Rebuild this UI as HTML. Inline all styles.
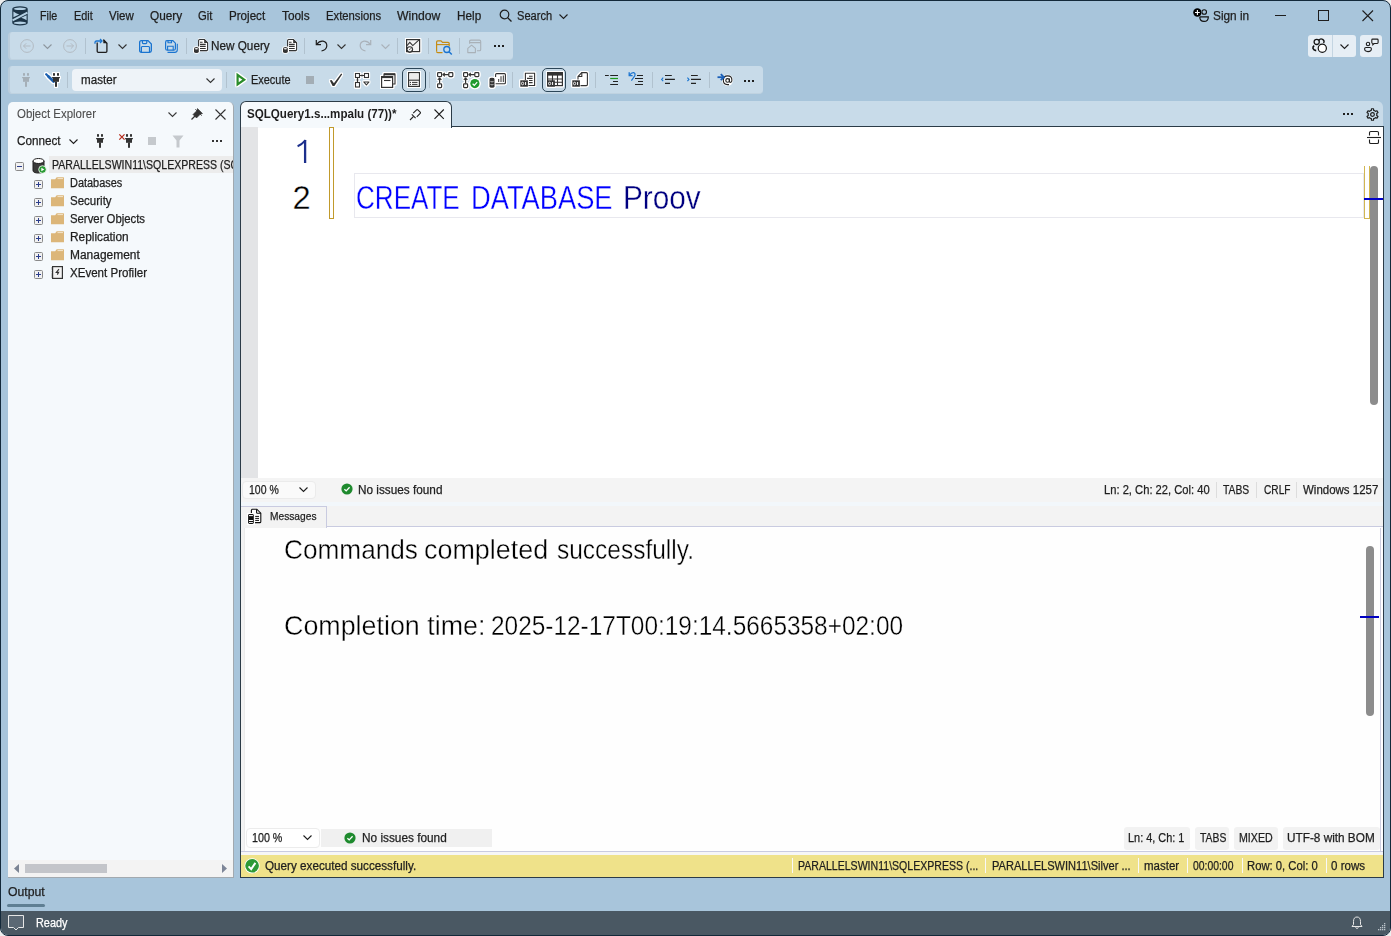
<!DOCTYPE html>
<html><head><meta charset="utf-8">
<style>
*{margin:0;padding:0;box-sizing:border-box}
html,body{width:1391px;height:936px;overflow:hidden;background:#eeeeee}
body{font-family:"Liberation Sans",sans-serif;font-size:12px;color:#1e1e1e;position:relative}
.a{position:absolute}
.t{position:absolute;white-space:nowrap;line-height:1;transform-origin:0 0;-webkit-text-stroke:0.25px currentColor}
svg{position:absolute;overflow:visible}
.tb{position:absolute;background:#c8dbe9;border-radius:4px;border-left:2px solid #bacddc;border-bottom:1px solid #bfd2e0}
.sep{position:absolute;width:1px;background:#b1c2cf}
</style></head><body>
<div class="a" style="left:0;top:0;width:1391px;height:936px;background:#a8c5db;border:1px solid #13293a;border-radius:8px"></div>
<svg style="left:12px;top:6px" width="16" height="20" viewBox="0 0 16 20">
      <path d="M0.3 2.8 A7.7 2.6 0 0 1 15.7 2.8 V16.9 A7.7 2.6 0 0 1 0.3 16.9 Z" fill="#1c3447"/>
      <ellipse cx="8" cy="2.8" rx="6.3" ry="1.3" fill="#b4d0e4"/>
      <ellipse cx="8" cy="16.9" rx="6.3" ry="1.3" fill="#b4d0e4"/>
      <path d="M1.4 5.6 Q4 7.6 7.2 8.6 L1.4 11.2 Z" fill="#b4d0e4"/>
      <path d="M14.6 9.2 L9.2 11.8 Q12 12.6 14.6 14.2 Z" fill="#b4d0e4"/>
      <path d="M0.6 14.4 L15.4 6.6" stroke="#b4d0e4" stroke-width="2"/>
    </svg>
<svg style="left:499px;top:9px" width="14" height="14"><circle cx="5.5" cy="5.5" r="4.3" fill="none" stroke="#1e1e1e" stroke-width="1.2"/><path d="M8.6 8.6 L12.5 12.5" stroke="#1e1e1e" stroke-width="1.3"/></svg>
<svg style="left:559px;top:14px" width="10" height="6"><path d="M0.5 0.5 L4.5 4.5 L8.5 0.5" fill="none" stroke="#1e1e1e" stroke-width="1.1"/></svg>
<svg style="left:1193px;top:8px" width="17" height="15" viewBox="0 0 17 15"><circle cx="11.2" cy="4" r="2.3" fill="none" stroke="#111" stroke-width="1.1"/><path d="M6.8 8.9 H15.3 Q15.3 13.4 11 13.4 Q6.8 13.4 6.8 8.9 Z" fill="none" stroke="#111" stroke-width="1.2"/><circle cx="4.4" cy="4.5" r="4.6" fill="#a9c6dc"/><circle cx="4.4" cy="4.5" r="4.2" fill="#000"/><path d="M4.4 2.1 V6.9 M2 4.5 H6.8" stroke="#fff" stroke-width="1.1"/></svg>
<div class="a" style="left:1275px;top:15px;width:11px;height:1px;background:#1e1e1e"></div>
<div class="a" style="left:1318px;top:10px;width:11px;height:11px;border:1px solid #1e1e1e"></div>
<svg style="left:1362px;top:10px" width="12" height="12"><path d="M0.5 0.5 L11 11 M11 0.5 L0.5 11" stroke="#1e1e1e" stroke-width="1.1"/></svg>
<div class="a" style="left:1308px;top:35px;width:48px;height:22px;background:#e6eef5;border-radius:3px"></div>
<div class="a" style="left:1332px;top:35px;width:1px;height:22px;background:#c4d5e2"></div>
<div class="a" style="left:1360px;top:35px;width:22px;height:22px;background:#e6eef5;border-radius:3px"></div>
<svg style="left:1312px;top:38px" width="17" height="16" viewBox="0 0 17 16"><circle cx="4.7" cy="3.9" r="2.6" fill="none" stroke="#111" stroke-width="1.3"/><path d="M7 2.3 A2.6 2.6 0 0 1 11.6 5" fill="none" stroke="#111" stroke-width="1.3"/><path d="M2.2 7.6 Q0.6 8.6 1 10.6 Q1.6 12.4 4.2 12.6" fill="none" stroke="#111" stroke-width="1.6"/><circle cx="10.3" cy="10.3" r="4.1" fill="#fff" stroke="#111" stroke-width="1.2"/></svg>
<svg style="left:1340px;top:44px" width="10" height="6"><path d="M0.5 0.5 L4.5 4.5 L8.5 0.5" fill="none" stroke="#1e1e1e" stroke-width="1.1"/></svg>
<svg style="left:1363px;top:38px" width="17" height="15" viewBox="0 0 17 15"><circle cx="5" cy="6" r="1.7" fill="none" stroke="#1e1e1e" stroke-width="1.1"/><path d="M1.6 10.8 Q1.6 9.5 3 9.5 H7 Q8.4 9.5 8.4 10.8 Q8.4 13.6 5 13.6 Q1.6 13.6 1.6 10.8 Z" fill="none" stroke="#1e1e1e" stroke-width="1.1"/><path d="M9.6 1.1 H14.2 Q15.1 1.1 15.1 2 V4.6 Q15.1 5.5 14.2 5.5 H11.2 L9.8 6.8 V5.5 Q8.8 5.5 8.8 4.6 V2 Q8.8 1.1 9.6 1.1 Z" fill="none" stroke="#1e1e1e" stroke-width="1.1"/></svg>
<div class="tb" style="left:8px;top:32px;width:505px;height:28px"></div>
<div class="tb" style="left:8px;top:66px;width:755px;height:28px"></div>
<svg style="left:20px;top:39px" width="14" height="14" viewBox="0 0 14 14"><circle cx="7" cy="7" r="6.4" fill="none" stroke="#b3bbc3" stroke-width="1"/><path d="M10.5 7 H3.5 M6.2 4.3 L3.5 7 L6.2 9.7" fill="none" stroke="#b3bbc3" stroke-width="1"/></svg>
<svg style="left:43px;top:44px" width="10" height="6"><path d="M0.5 0.5 L4.5 4.5 L8.5 0.5" fill="none" stroke="#8d969e" stroke-width="1.1"/></svg>
<svg style="left:63px;top:39px" width="14" height="14" viewBox="0 0 14 14"><circle cx="7" cy="7" r="6.4" fill="none" stroke="#b3bbc3" stroke-width="1"/><path d="M3.5 7 H10.5 M7.8 4.3 L10.5 7 L7.8 9.7" fill="none" stroke="#b3bbc3" stroke-width="1"/></svg>
<div class="sep" style="left:85px;top:38px;height:16px"></div>
<svg style="left:94px;top:38px" width="15" height="16" viewBox="0 0 15 16"><path d="M3.2 4.5 V13.3 Q3.2 14.4 4.3 14.4 H11.8 Q12.9 14.4 12.9 13.3 V5.2 L9.5 1.6" fill="none" stroke="#1e1e1e" stroke-width="1.3"/><path d="M9.3 1.2 L13.2 5.2 H9.3 Z" fill="#1e1e1e"/><path d="M1 5.8 V4.6 Q1 3 2.6 3 H7.5" fill="none" stroke="#1a74d0" stroke-width="1.3"/><path d="M6 1 L8 3 L6 5" fill="none" stroke="#1a74d0" stroke-width="1.3"/></svg>
<svg style="left:118px;top:44px" width="10" height="6"><path d="M0.5 0.5 L4.5 4.5 L8.5 0.5" fill="none" stroke="#333" stroke-width="1.1"/></svg>
<svg style="left:139px;top:40px" width="13" height="13" viewBox="0 0 13 13"><path d="M2.2 0.65 H9 L12.35 4 V10.6 Q12.35 12.35 10.6 12.35 H2.4 Q0.65 12.35 0.65 10.6 V2.4 Q0.65 0.65 2.2 0.65 Z" fill="none" stroke="#1a74d0" stroke-width="1.3"/><path d="M3.4 0.65 V2.6 Q3.4 3.6 4.4 3.6 H6.8 Q7.8 3.6 7.8 2.6 V0.65 M2.4 12.35 V7.4 Q2.4 6.5 3.3 6.5 H9.6 Q10.5 6.5 10.5 7.4 V12.35" fill="none" stroke="#1a74d0" stroke-width="1.2"/></svg>
<svg style="left:165px;top:40px" width="13" height="13" viewBox="0 0 13 13"><path d="M1.9 0.6 H7.8 L10.4 3.2 V8.4 Q10.4 10.2 8.6 10.2 H2.4 Q0.6 10.2 0.6 8.4 V2.4 Q0.6 0.6 1.9 0.6 Z" fill="none" stroke="#1a74d0" stroke-width="1.2"/><path d="M3 0.6 V2.8 H6.5 V0.6 M2.6 10.2 V6.3 H8.2 V10.2" fill="none" stroke="#1a74d0" stroke-width="1.1"/><path d="M2.5 12.4 H9.8 Q12.3 12.4 12.3 9.8 V3.8" fill="none" stroke="#1a74d0" stroke-width="1.1"/></svg>
<div class="sep" style="left:186px;top:38px;height:16px"></div>
<svg style="left:193px;top:38px" width="17" height="17" viewBox="0 0 17 17"><path d="M5 0.6 H11.7 L15.4 4.3 V13.4 H5 Z" fill="#fff"/><rect x="0" y="8.2" width="7" height="7.6" rx="3" fill="#fff"/><path d="M5.6 8.6 V2.5 Q5.6 1.5 6.6 1.5 H11.4 L14.6 4.7 V11.6 Q14.6 12.6 13.6 12.6 H7" fill="#fff" stroke="#333" stroke-width="1.1"/><path d="M11.2 1.5 L14.6 4.9 H11.2 Z" fill="#333"/><path d="M7 4.3 H9.6 M7 6.4 H12.7 M7 8.4 H12.7 M7 10.5 H12.7" stroke="#333" stroke-width="1.1"/><path d="M1 10.6 V13.4 Q1 15 3.4 15 Q5.8 15 5.8 13.4 V10.6 Q5.8 9.1 3.4 9.1 Q1 9.1 1 10.6Z" fill="#333"/><ellipse cx="3.4" cy="10.7" rx="1.6" ry="0.75" fill="#f0f0f0"/></svg>
<svg style="left:282px;top:38px" width="17" height="17" viewBox="0 0 17 17"><path d="M5 0.6 H11.7 L15.4 4.3 V13.4 H5 Z" fill="#fff"/><rect x="0" y="8.2" width="7" height="7.6" rx="3" fill="#fff"/><path d="M5.6 8.6 V2.5 Q5.6 1.5 6.6 1.5 H11.4 L14.6 4.7 V11.6 Q14.6 12.6 13.6 12.6 H7" fill="#fff" stroke="#333" stroke-width="1.1"/><path d="M11.2 1.5 L14.6 4.9 H11.2 Z" fill="#333"/><path d="M7 4.3 H9.6 M7 6.4 H12.7 M7 8.4 H12.7 M7 10.5 H12.7" stroke="#333" stroke-width="1.1"/><path d="M1 10.6 V13.4 Q1 15 3.4 15 Q5.8 15 5.8 13.4 V10.6 Q5.8 9.1 3.4 9.1 Q1 9.1 1 10.6Z" fill="#333"/><ellipse cx="3.4" cy="10.7" rx="1.6" ry="0.75" fill="#f0f0f0"/></svg>
<div class="sep" style="left:304px;top:38px;height:16px"></div>
<svg style="left:315px;top:39px" width="13" height="13" viewBox="0 0 13 13"><path d="M1.3 1 V5.7 H6" fill="none" stroke="#1e1e1e" stroke-width="1.2"/><path d="M1.6 5.4 Q4.5 1.8 8 2.2 Q12 3 11.8 7 Q11.4 11 6.5 12" fill="none" stroke="#1e1e1e" stroke-width="1.2"/></svg>
<svg style="left:337px;top:44px" width="10" height="6"><path d="M0.5 0.5 L4.5 4.5 L8.5 0.5" fill="none" stroke="#333" stroke-width="1.1"/></svg>
<svg style="left:359px;top:39px" width="13" height="13" viewBox="0 0 13 13"><path d="M11.7 1 V5.7 H7" fill="none" stroke="#aab2ba" stroke-width="1.2"/><path d="M11.4 5.4 Q8.5 1.8 5 2.2 Q1 3 1.2 7 Q1.6 11 6.5 12" fill="none" stroke="#aab2ba" stroke-width="1.2"/></svg>
<svg style="left:381px;top:44px" width="10" height="6"><path d="M0.5 0.5 L4.5 4.5 L8.5 0.5" fill="none" stroke="#aab2ba" stroke-width="1.1"/></svg>
<div class="sep" style="left:397px;top:38px;height:16px"></div>
<svg style="left:406px;top:39px;filter:drop-shadow(1px 0 0 #fff) drop-shadow(-1px 0 0 #fff) drop-shadow(0 1px 0 #fff) drop-shadow(0 -1px 0 #fff);" width="15" height="15" viewBox="0 0 15 15"><rect x="0.6" y="0.6" width="13" height="12" fill="#f4f4f4" stroke="#333" stroke-width="1.2"/><path d="M1 6.6 L3.8 3.4 L6.8 6.6 L13 0.9" fill="none" stroke="#333" stroke-width="1.1"/><circle cx="3.8" cy="10.6" r="3.3" fill="#333"/><circle cx="3.8" cy="10.3" r="2.1" fill="#f4f4f4"/><path d="M3.2 11 L4.8 9.4" stroke="#333" stroke-width="0.9"/></svg>
<div class="sep" style="left:428px;top:38px;height:16px"></div>
<svg style="left:436px;top:40px" width="17" height="15" viewBox="0 0 17 15"><path d="M0.6 11.5 V2 Q0.6 0.8 1.8 0.8 H5 L6.5 2.3 H12 Q13.2 2.3 13.2 3.5 V6.5" fill="none" stroke="#c58b12" stroke-width="1.2"/><path d="M0.6 4.6 H13" stroke="#c58b12" stroke-width="1.1"/><path d="M0.6 11.5 Q0.6 12.6 1.8 12.6 H6.5" fill="none" stroke="#c58b12" stroke-width="1.2"/><circle cx="10.8" cy="9.5" r="3" fill="none" stroke="#1a74d0" stroke-width="1.3"/><path d="M13 11.7 L15.8 14.5" stroke="#1a74d0" stroke-width="1.5"/></svg>
<div class="sep" style="left:459px;top:38px;height:16px"></div>
<svg style="left:467px;top:39px" width="15" height="15" viewBox="0 0 15 15"><path d="M2.6 4.8 V2.4 Q2.6 1.1 3.9 1.1 H12.4 Q13.7 1.1 13.7 2.4 V10.5 Q13.7 11.8 12.4 11.8 H10 M2.6 3.6 H13.7" fill="none" stroke="#a9b1b8" stroke-width="1.1"/><path d="M0.8 13.6 V9.4 L4.6 6.2 L8.4 9.4 V13.6 Z" fill="none" stroke="#a9b1b8" stroke-width="1.1" stroke-linejoin="round"/></svg>
<svg style="left:494px;top:45px" width="12" height="3"><rect x="0" y="0" width="2" height="2" fill="#1e1e1e"/><rect x="4" y="0" width="2" height="2" fill="#1e1e1e"/><rect x="8" y="0" width="2" height="2" fill="#1e1e1e"/></svg>
<svg style="left:22px;top:73px" width="8" height="14" viewBox="0 0 8 14"><rect x="1" y="0" width="2" height="2.8" rx="0.6" fill="#a5afb7"/><rect x="5" y="0" width="2" height="2.8" rx="0.6" fill="#a5afb7"/><rect x="0" y="4" width="8" height="1.2" rx="0.5" fill="#a5afb7"/><rect x="1" y="4.5" width="6" height="4.3" fill="#a5afb7"/><rect x="3" y="8.5" width="2" height="5.3" fill="#a5afb7"/></svg>
<svg style="left:44px;top:72px;filter:drop-shadow(1px 0 0 #fff) drop-shadow(-1px 0 0 #fff) drop-shadow(0 1px 0 #fff) drop-shadow(0 -1px 0 #fff);" width="17" height="16" viewBox="0 0 17 16"><path d="M2.2 2.2 L3 3" stroke="#1a5fb0" stroke-width="2.2" stroke-linecap="round"/><path d="M4.2 4.2 L9.6 9.6" stroke="#1a5fb0" stroke-width="2.8" stroke-linecap="round"/><rect x="9" y="1" width="2" height="2.8" rx="0.6" fill="#333"/><rect x="13" y="1" width="2" height="2.8" rx="0.6" fill="#333"/><rect x="8" y="5" width="8" height="1.2" rx="0.5" fill="#333"/><rect x="9" y="5.5" width="6" height="4.3" fill="#333"/><rect x="11" y="9.5" width="2" height="5.3" fill="#333"/></svg>
<div class="sep" style="left:67px;top:72px;height:16px"></div>
<div class="a" style="left:72px;top:69px;width:150px;height:22px;background:#eef3f8;border-radius:4px"></div>
<svg style="left:206px;top:78px" width="10" height="6"><path d="M0.5 0.5 L4.5 4.5 L8.5 0.5" fill="none" stroke="#333" stroke-width="1.1"/></svg>
<div class="sep" style="left:226px;top:72px;height:16px"></div>
<svg style="left:236px;top:73px;filter:drop-shadow(1px 0 0 #fff) drop-shadow(-1px 0 0 #fff) drop-shadow(0 1px 0 #fff) drop-shadow(0 -1px 0 #fff);" width="10" height="14"><path d="M1.6 2 L8.2 6.7 L1.6 11.4 Z" fill="#fff" stroke="#2a8c2a" stroke-width="2.2"/></svg>
<div class="a" style="left:306px;top:76px;width:8px;height:8px;background:#a3adb5"></div>
<svg style="left:329px;top:73px;filter:drop-shadow(1px 0 0 #fff) drop-shadow(-1px 0 0 #fff) drop-shadow(0 1px 0 #fff) drop-shadow(0 -1px 0 #fff);" width="14" height="14" viewBox="0 0 14 14"><path d="M0.8 7.6 L2.6 7 L4.9 10.2 L12.2 0.6 L13.2 1.2 L5.4 13 L3.6 13 Z" fill="#333"/></svg>
<svg style="left:354px;top:72px;filter:drop-shadow(1px 0 0 #fff) drop-shadow(-1px 0 0 #fff) drop-shadow(0 1px 0 #fff) drop-shadow(0 -1px 0 #fff);" width="16" height="16" viewBox="0 0 16 16"><rect x="1.5" y="1.5" width="4" height="4" fill="#fff" stroke="#333" stroke-width="1.1"/><rect x="10.5" y="1.5" width="4" height="4" fill="#fff" stroke="#333" stroke-width="1.1"/><path d="M5.5 3.5 H10.5 M3.5 5.5 V10" stroke="#333" stroke-width="1.1"/><circle cx="8" cy="3.5" r="0.9" fill="#333"/><circle cx="3.5" cy="8" r="0.9" fill="#333"/><rect x="1.5" y="10.5" width="4" height="4.5" fill="#fff" stroke="#333" stroke-width="1.1"/><path d="M9.8 10 H15 L12.4 12.8 Z" fill="#fff" stroke="#333" stroke-width="1.1" stroke-linejoin="round"/></svg>
<svg style="left:381px;top:73px;filter:drop-shadow(1px 0 0 #fff) drop-shadow(-1px 0 0 #fff) drop-shadow(0 1px 0 #fff) drop-shadow(0 -1px 0 #fff);" width="15" height="15" viewBox="0 0 15 15"><path d="M3 3 V1 H14 V11 H12" fill="#fff" stroke="#333" stroke-width="1.1"/><path d="M3 1.3 H14" stroke="#333" stroke-width="2"/><rect x="0.6" y="3.6" width="11" height="10.8" fill="#fff" stroke="#333" stroke-width="1.2"/><path d="M0.6 4.3 H11.6" stroke="#333" stroke-width="1.6"/><path d="M3 7.5 H9.5" stroke="#333" stroke-width="1.1"/></svg>
<div class="a" style="left:402px;top:68px;width:24px;height:24px;border:1.5px solid #2c4658;border-radius:5px;background:#c9dbe8"></div>
<svg style="left:408px;top:72px;filter:drop-shadow(1px 0 0 #fff) drop-shadow(-1px 0 0 #fff) drop-shadow(0 1px 0 #fff) drop-shadow(0 -1px 0 #fff);" width="12" height="15" viewBox="0 0 12 15"><rect x="0.6" y="0.6" width="10.8" height="13.8" fill="#fff" stroke="#333" stroke-width="1.2"/><rect x="1.5" y="1.5" width="9" height="6.8" fill="#ececec"/><path d="M0.6 8.2 H11.4" stroke="#333" stroke-width="1.1"/><path d="M4 10.4 H9.5 M4 12.4 H9.5" stroke="#333" stroke-width="1"/><circle cx="2.4" cy="10.4" r="0.6" fill="#333"/><circle cx="2.4" cy="12.4" r="0.6" fill="#333"/></svg>
<div class="sep" style="left:429px;top:72px;height:16px"></div>
<svg style="left:437px;top:72px;filter:drop-shadow(1px 0 0 #fff) drop-shadow(-1px 0 0 #fff) drop-shadow(0 1px 0 #fff) drop-shadow(0 -1px 0 #fff);" width="17" height="17" viewBox="0 0 17 17"><rect x="0.6" y="0.6" width="4" height="4" rx="0.8" fill="#fff" stroke="#333" stroke-width="1.2"/><rect x="11.8" y="0.6" width="4" height="4" rx="0.8" fill="#fff" stroke="#333" stroke-width="1.2"/><path d="M6 2.6 H11.8 M7.8 0.8 L6 2.6 L7.8 4.4" fill="none" stroke="#333" stroke-width="1.2"/><path d="M2.6 11.8 V6 M0.8 7.8 L2.6 6 L4.4 7.8" fill="none" stroke="#333" stroke-width="1.2"/><rect x="0.6" y="11.8" width="4" height="3.8" rx="0.8" fill="#fff" stroke="#333" stroke-width="1.2"/></svg>
<svg style="left:463px;top:72px;filter:drop-shadow(1px 0 0 #fff) drop-shadow(-1px 0 0 #fff) drop-shadow(0 1px 0 #fff) drop-shadow(0 -1px 0 #fff);" width="17" height="17" viewBox="0 0 17 17"><rect x="0.6" y="0.6" width="4" height="4" rx="0.8" fill="#fff" stroke="#333" stroke-width="1.2"/><rect x="11.8" y="0.6" width="4" height="4" rx="0.8" fill="#fff" stroke="#333" stroke-width="1.2"/><path d="M6 2.6 H11.8 M7.8 0.8 L6 2.6 L7.8 4.4" fill="none" stroke="#333" stroke-width="1.2"/><path d="M2.6 11.8 V6 M0.8 7.8 L2.6 6 L4.4 7.8" fill="none" stroke="#333" stroke-width="1.2"/><rect x="0.6" y="11.8" width="4" height="3.8" rx="0.8" fill="#fff" stroke="#333" stroke-width="1.2"/><circle cx="11.9" cy="11.6" r="4.6" fill="#1e9a2e"/><path d="M9.6 11.7 L11.3 13.3 L14.2 10.2" fill="none" stroke="#fff" stroke-width="1.2"/></svg>
<svg style="left:489px;top:73px;filter:drop-shadow(1px 0 0 #fff) drop-shadow(-1px 0 0 #fff) drop-shadow(0 1px 0 #fff) drop-shadow(0 -1px 0 #fff);" width="17" height="15" viewBox="0 0 17 15"><path d="M6.6 4 V1.6 Q6.6 0.6 7.6 0.6 H15.4 Q16.4 0.6 16.4 1.6 V9.8 Q16.4 10.8 15.4 10.8 H6.6" fill="#fff" stroke="#333" stroke-width="1.1"/><path d="M9.7 9 V6 M12 9 V3.2 M14.3 9 V2.5" stroke="#333" stroke-width="1"/><path d="M0.5 6 Q0.5 4.8 3 4.8 Q5.5 4.8 5.5 6 V13.5 Q5.5 14.7 3 14.7 Q0.5 14.7 0.5 13.5 Z" fill="#333"/><path d="M1.5 8.5 Q3 9.3 4.5 8.5 M1.5 11.5 Q3 12.3 4.5 11.5" fill="none" stroke="#ddd" stroke-width="0.8"/></svg>
<div class="sep" style="left:512px;top:72px;height:16px"></div>
<svg style="left:520px;top:72px;filter:drop-shadow(1px 0 0 #fff) drop-shadow(-1px 0 0 #fff) drop-shadow(0 1px 0 #fff) drop-shadow(0 -1px 0 #fff);" width="17" height="17" viewBox="0 0 17 17"><path d="M5.4 8 V1.2 H14.6 V13.5 H8.5" fill="#fff" stroke="#333" stroke-width="1.1"/><path d="M9 4.3 H12.6 M7 6.4 H12.6 M9 8.5 H12.6 M9 10.6 H12.6" stroke="#333" stroke-width="1.1"/><rect x="0.3" y="8.3" width="7.6" height="6.4" fill="#333"/><path d="M2.6 10.2 Q1.5 10.2 1.5 11.5 Q1.5 12.8 2.6 12.8 Q3.7 12.8 3.7 11.5 Q3.7 10.2 2.6 10.2 Z" fill="none" stroke="#fff" stroke-width="0.9"/><path d="M5.6 10 V13" stroke="#fff" stroke-width="1"/></svg>
<div class="a" style="left:542px;top:68px;width:24px;height:24px;border:1.5px solid #2c4658;border-radius:5px;background:#c9dbe8"></div>
<svg style="left:547px;top:72px;filter:drop-shadow(1px 0 0 #fff) drop-shadow(-1px 0 0 #fff) drop-shadow(0 1px 0 #fff) drop-shadow(0 -1px 0 #fff);" width="17" height="17" viewBox="0 0 17 17"><rect x="0.6" y="0.6" width="14.8" height="13" fill="#fff" stroke="#333" stroke-width="1.2"/><rect x="0.6" y="0.6" width="14.8" height="3" fill="#333"/><path d="M0.6 7 H15.4 M0.6 10.3 H15.4 M5.5 0.6 V13.6 M10.5 0.6 V13.6" stroke="#333" stroke-width="1.1"/><rect x="0.3" y="8.3" width="7.6" height="6.4" fill="#333"/><path d="M2.6 10.2 Q1.5 10.2 1.5 11.5 Q1.5 12.8 2.6 12.8 Q3.7 12.8 3.7 11.5 Q3.7 10.2 2.6 10.2 Z" fill="none" stroke="#fff" stroke-width="0.9"/><path d="M5.6 10 V13" stroke="#fff" stroke-width="1"/></svg>
<svg style="left:572px;top:72px;filter:drop-shadow(1px 0 0 #fff) drop-shadow(-1px 0 0 #fff) drop-shadow(0 1px 0 #fff) drop-shadow(0 -1px 0 #fff);" width="17" height="17" viewBox="0 0 17 17"><path d="M6 7.5 V4.5 L9.8 0.6 H14.4 Q15.4 0.6 15.4 1.6 V12.6 Q15.4 13.6 14.4 13.6 H8.5" fill="#fff" stroke="#333" stroke-width="1.1"/><path d="M6 4.5 H9.8 V0.6" fill="none" stroke="#333" stroke-width="1.1"/><rect x="0.3" y="8.3" width="7.6" height="6.4" fill="#333"/><path d="M2.6 10.2 Q1.5 10.2 1.5 11.5 Q1.5 12.8 2.6 12.8 Q3.7 12.8 3.7 11.5 Q3.7 10.2 2.6 10.2 Z" fill="none" stroke="#fff" stroke-width="0.9"/><path d="M5.6 10 V13" stroke="#fff" stroke-width="1"/></svg>
<div class="sep" style="left:595px;top:72px;height:16px"></div>
<svg style="left:600px;top:70px" width="20" height="18" viewBox="0 0 20 18"><path d="M5 5.5 H8.8 M10.2 5.5 H18 M13 11.5 H18 M10.2 14.5 H18" stroke="#222" stroke-width="1.2"/><path d="M10.2 8.5 H18" stroke="#1a9a1a" stroke-width="1.2"/></svg>
<svg style="left:626px;top:70px" width="20" height="18" viewBox="0 0 20 18"><path d="M11 5.5 H17 M9 8.5 H17 M12 11.5 H17 M9 14.5 H17" stroke="#222" stroke-width="1.2"/><path d="M3.2 2.2 V5.6 H6.6" fill="none" stroke="#1a74d0" stroke-width="1.3"/><path d="M3.6 5.2 Q5.5 2.4 7.5 2.6 Q9.6 3 8.8 5.8 L5.4 10.6" fill="none" stroke="#1a74d0" stroke-width="1.2"/></svg>
<div class="sep" style="left:652px;top:72px;height:16px"></div>
<svg style="left:660px;top:72px" width="16" height="14" viewBox="0 0 16 14"><path d="M5 3.5 H11.8 M5 7.4 H14.9 M5 11.4 H10" stroke="#222" stroke-width="1.1"/><path d="M3.2 5.6 L1.6 7.4 L3.2 9.2" fill="none" stroke="#1a74d0" stroke-width="1.1"/></svg>
<svg style="left:686px;top:72px" width="16" height="14" viewBox="0 0 16 14"><path d="M5 3.5 H11.8 M5 7.4 H14.9 M5 11.4 H10" stroke="#222" stroke-width="1.1"/><path d="M1.4 5.6 L3 7.4 L1.4 9.2" fill="none" stroke="#1a74d0" stroke-width="1.1"/></svg>
<div class="sep" style="left:709px;top:72px;height:16px"></div>
<svg style="left:716px;top:72px" width="18" height="16" viewBox="0 0 18 16"><circle cx="11.5" cy="8.2" r="5.6" fill="#fff"/><circle cx="11.6" cy="8.4" r="1.8" fill="none" stroke="#222" stroke-width="1.1"/><path d="M13.4 6.6 V9.2 Q13.4 10.4 14.5 10.4 Q15.9 10.4 15.9 8.2 Q15.9 3.9 11.6 3.9 Q7.3 3.9 7.3 8.3 Q7.3 12.6 11.6 12.6 H13" fill="none" stroke="#222" stroke-width="1.1"/><path d="M1.5 5.2 H7" stroke="#1a5fb8" stroke-width="1.8"/><path d="M4.8 2.2 L7.8 5.2 L4.8 8.2" fill="none" stroke="#1a5fb8" stroke-width="1.9"/></svg>
<svg style="left:744px;top:80px" width="12" height="3"><rect x="0" y="0" width="2" height="2" fill="#1e1e1e"/><rect x="4" y="0" width="2" height="2" fill="#1e1e1e"/><rect x="8" y="0" width="2" height="2" fill="#1e1e1e"/></svg>
<div class="a" style="left:8px;top:102px;width:226px;height:776px;background:#f5f9fc;border-radius:5px 5px 0 0;border-right:1px solid #a2a9af;border-bottom:1px solid #a2a9af"></div>
<svg style="left:168px;top:112px" width="10" height="6"><path d="M0.5 0.5 L4.5 4.5 L8.5 0.5" fill="none" stroke="#3a3a3a" stroke-width="1.1"/></svg>
<svg style="left:191px;top:108px" width="12" height="12" viewBox="0 0 12 12">
      <path d="M4 1 L11 8 M6.5 0.5 L11.5 5.5 L9 6.5 L5.5 10 L2 6.5 L5.5 3 Z" fill="#333" stroke="#333" stroke-width="0.6"/><path d="M0.5 11.5 L4 8" stroke="#333" stroke-width="1.2"/></svg>
<svg style="left:215px;top:109px" width="12" height="12"><path d="M0.5 0.5 L10.5 10.5 M10.5 0.5 L0.5 10.5" stroke="#333" stroke-width="1.1"/></svg>
<svg style="left:69px;top:139px" width="10" height="6"><path d="M0.5 0.5 L4.5 4.5 L8.5 0.5" fill="none" stroke="#1e1e1e" stroke-width="1.1"/></svg>
<svg style="left:96px;top:134px" width="8" height="14" viewBox="0 0 8 14"><rect x="1" y="0" width="2" height="2.8" rx="0.6" fill="#333"/><rect x="5" y="0" width="2" height="2.8" rx="0.6" fill="#333"/><rect x="0" y="4" width="8" height="1.2" rx="0.5" fill="#333"/><rect x="1" y="4.5" width="6" height="4.3" fill="#333"/><rect x="3" y="8.5" width="2" height="5.3" fill="#333"/></svg>
<svg style="left:125px;top:134px" width="8" height="14" viewBox="0 0 8 14"><rect x="1" y="0" width="2" height="2.8" rx="0.6" fill="#333"/><rect x="5" y="0" width="2" height="2.8" rx="0.6" fill="#333"/><rect x="0" y="4" width="8" height="1.2" rx="0.5" fill="#333"/><rect x="1" y="4.5" width="6" height="4.3" fill="#333"/><rect x="3" y="8.5" width="2" height="5.3" fill="#333"/></svg>
<svg style="left:119px;top:134px" width="6" height="6"><path d="M0.3 0.3 L5.5 5.7 M5.5 0.3 L0.3 5.7" stroke="#b52a1a" stroke-width="1.2"/></svg>
<div class="a" style="left:148px;top:137px;width:8px;height:8px;background:#c5c9cd"></div>
<svg style="left:172px;top:135px" width="12" height="13"><path d="M0.5 0.5 H11.5 L7.5 5.5 V12.5 H4.5 V5.5 Z" fill="#c5c9cd"/></svg>
<svg style="left:212px;top:140px" width="12" height="3"><rect x="0" y="0" width="2" height="2" fill="#333"/><rect x="4" y="0" width="2" height="2" fill="#333"/><rect x="8" y="0" width="2" height="2" fill="#333"/></svg>
<div class="a" style="left:49px;top:156px;width:184px;height:17px;background:#ececec"></div>
<svg style="left:15px;top:162px" width="9" height="9"><rect x="0.5" y="0.5" width="8" height="8" rx="1" fill="#f1f1f1" stroke="#8a8a8a"/><path d="M2 4.5 H7" stroke="#2c3e8c" stroke-width="1"/></svg>
<svg style="left:32px;top:158px" width="15" height="16" viewBox="0 0 15 16">
      <path d="M1 3 V12.5 Q1 15 6.5 15 Q12 15 12 12.5 V3" fill="#3a3a3a" stroke="#1e1e1e"/>
      <ellipse cx="6.5" cy="3" rx="5.5" ry="2.5" fill="#fff" stroke="#1e1e1e"/>
      <circle cx="10.5" cy="11.5" r="3.8" fill="#2b9a36" stroke="#fff" stroke-width="0.8"/><path d="M9.3 9.7 L12.3 11.5 L9.3 13.3 Z" fill="#fff"/></svg>
<svg style="left:34px;top:180px" width="9" height="9"><rect x="0.5" y="0.5" width="8" height="8" rx="1" fill="#f1f1f1" stroke="#8a8a8a"/><path d="M2 4.5 H7" stroke="#2c3e8c" stroke-width="1"/><path d="M4.5 2 V7" stroke="#2c3e8c" stroke-width="1"/></svg>
<svg style="left:51px;top:177px" width="13" height="12" viewBox="0 0 13 12"><path d="M0 2.2 H4.2 L5.4 0.6 Q5.6 0.3 6 0.3 H12.6 Q13 0.3 13 0.7 V11.2 H0 Z" fill="#dcb679"/><path d="M6.5 1.6 H12" stroke="#f6ead4" stroke-width="0.9"/></svg>
<svg style="left:34px;top:198px" width="9" height="9"><rect x="0.5" y="0.5" width="8" height="8" rx="1" fill="#f1f1f1" stroke="#8a8a8a"/><path d="M2 4.5 H7" stroke="#2c3e8c" stroke-width="1"/><path d="M4.5 2 V7" stroke="#2c3e8c" stroke-width="1"/></svg>
<svg style="left:51px;top:195px" width="13" height="12" viewBox="0 0 13 12"><path d="M0 2.2 H4.2 L5.4 0.6 Q5.6 0.3 6 0.3 H12.6 Q13 0.3 13 0.7 V11.2 H0 Z" fill="#dcb679"/><path d="M6.5 1.6 H12" stroke="#f6ead4" stroke-width="0.9"/></svg>
<svg style="left:34px;top:216px" width="9" height="9"><rect x="0.5" y="0.5" width="8" height="8" rx="1" fill="#f1f1f1" stroke="#8a8a8a"/><path d="M2 4.5 H7" stroke="#2c3e8c" stroke-width="1"/><path d="M4.5 2 V7" stroke="#2c3e8c" stroke-width="1"/></svg>
<svg style="left:51px;top:213px" width="13" height="12" viewBox="0 0 13 12"><path d="M0 2.2 H4.2 L5.4 0.6 Q5.6 0.3 6 0.3 H12.6 Q13 0.3 13 0.7 V11.2 H0 Z" fill="#dcb679"/><path d="M6.5 1.6 H12" stroke="#f6ead4" stroke-width="0.9"/></svg>
<svg style="left:34px;top:234px" width="9" height="9"><rect x="0.5" y="0.5" width="8" height="8" rx="1" fill="#f1f1f1" stroke="#8a8a8a"/><path d="M2 4.5 H7" stroke="#2c3e8c" stroke-width="1"/><path d="M4.5 2 V7" stroke="#2c3e8c" stroke-width="1"/></svg>
<svg style="left:51px;top:231px" width="13" height="12" viewBox="0 0 13 12"><path d="M0 2.2 H4.2 L5.4 0.6 Q5.6 0.3 6 0.3 H12.6 Q13 0.3 13 0.7 V11.2 H0 Z" fill="#dcb679"/><path d="M6.5 1.6 H12" stroke="#f6ead4" stroke-width="0.9"/></svg>
<svg style="left:34px;top:252px" width="9" height="9"><rect x="0.5" y="0.5" width="8" height="8" rx="1" fill="#f1f1f1" stroke="#8a8a8a"/><path d="M2 4.5 H7" stroke="#2c3e8c" stroke-width="1"/><path d="M4.5 2 V7" stroke="#2c3e8c" stroke-width="1"/></svg>
<svg style="left:51px;top:249px" width="13" height="12" viewBox="0 0 13 12"><path d="M0 2.2 H4.2 L5.4 0.6 Q5.6 0.3 6 0.3 H12.6 Q13 0.3 13 0.7 V11.2 H0 Z" fill="#dcb679"/><path d="M6.5 1.6 H12" stroke="#f6ead4" stroke-width="0.9"/></svg>
<svg style="left:34px;top:270px" width="9" height="9"><rect x="0.5" y="0.5" width="8" height="8" rx="1" fill="#f1f1f1" stroke="#8a8a8a"/><path d="M2 4.5 H7" stroke="#2c3e8c" stroke-width="1"/><path d="M4.5 2 V7" stroke="#2c3e8c" stroke-width="1"/></svg>
<svg style="left:51px;top:266px" width="13" height="13" viewBox="0 0 13 13"><rect x="1.6" y="0.6" width="9.8" height="11.8" fill="#f4f4f4" stroke="#333" stroke-width="1.2"/><path d="M0.8 1.5 Q1.6 1.9 0.8 2.3 M0.8 3.3 Q1.6 3.7 0.8 4.1 M0.8 5.1 Q1.6 5.5 0.8 5.9 M0.8 6.9 Q1.6 7.3 0.8 7.7 M0.8 8.7 Q1.6 9.1 0.8 9.5 M0.8 10.5 Q1.6 10.9 0.8 11.3" fill="none" stroke="#333" stroke-width="0.9"/><path d="M8 3.2 L5.3 6.4 H7.6 L6.3 8.6" fill="none" stroke="#333" stroke-width="1.1"/></svg>
<div class="a" style="left:8px;top:860px;width:225px;height:17px;background:#f3f3f3"></div>
<svg style="left:14px;top:864px" width="6" height="10"><path d="M5 0 V9 L0 4.5 Z" fill="#7b8494"/></svg>
<div class="a" style="left:25px;top:864px;width:82px;height:9px;background:#c3c5ca"></div>
<svg style="left:222px;top:864px" width="6" height="10"><path d="M0 0 V9 L5 4.5 Z" fill="#7d8597"/></svg>
<div class="a" style="left:240px;top:101px;width:1143px;height:26px;background:#c8dbe9;border-radius:6px 6px 0 0"></div>
<div class="a" style="left:240px;top:126px;width:1144px;height:752px;border:1px solid #2b3b47;border-top:1px solid #2b3b47;background:#fff"></div>
<div class="a" style="left:240px;top:101px;width:212px;height:27px;background:#f5f9fc;border:1px solid #2b3b47;border-bottom:none;border-radius:6px 6px 0 0"></div>
<svg style="left:409px;top:108px" width="13" height="13" viewBox="0 0 13 13"><path d="M2.8 6.4 L6.6 10.2" stroke="#222" stroke-width="1.1" fill="none"/><path d="M4.2 5.2 L7.6 1.8 Q8.2 1.2 8.8 1.8 L11.2 4.2 Q11.8 4.8 11.2 5.4 L7.8 8.8" fill="none" stroke="#222" stroke-width="1.1"/><path d="M4.6 8.4 L1 12" stroke="#222" stroke-width="1.1"/></svg>
<svg style="left:434px;top:109px" width="11" height="11"><path d="M0.5 0.5 L9.8 9.8 M9.8 0.5 L0.5 9.8" stroke="#1e1e1e" stroke-width="1.1"/></svg>
<svg style="left:1343px;top:113px" width="12" height="3"><rect x="0" y="0" width="2" height="2" fill="#1e1e1e"/><rect x="4" y="0" width="2" height="2" fill="#1e1e1e"/><rect x="8" y="0" width="2" height="2" fill="#1e1e1e"/></svg>
<svg style="left:1366px;top:108px" width="13" height="13" viewBox="0 0 12 12"><path d="M4.00 2.54 L4.90 2.15 L5.06 0.68 L6.94 0.68 L7.10 2.15 L8.00 2.54 L8.78 3.12 L10.14 2.53 L11.07 4.15 L9.88 5.03 L10.00 6.00 L9.88 6.97 L11.07 7.85 L10.14 9.47 L8.78 8.88 L8.00 9.46 L7.10 9.85 L6.94 11.32 L5.06 11.32 L4.90 9.85 L4.00 9.46 L3.22 8.88 L1.86 9.47 L0.93 7.85 L2.12 6.97 L2.00 6.00 L2.12 5.03 L0.93 4.15 L1.86 2.53 L3.22 3.12 Z" fill="none" stroke="#1e1e1e" stroke-width="1.1" stroke-linejoin="round"/><circle cx="6" cy="6" r="1.7" fill="none" stroke="#1e1e1e" stroke-width="1.1"/></svg>
<svg style="left:296px;top:139px" width="12" height="25" viewBox="0 0 12 25"><path d="M9.1 1 V24" stroke="#1c2f8c" stroke-width="2.3"/><path d="M9.6 1.2 Q6 5.5 1.6 7.2" fill="none" stroke="#1c2f8c" stroke-width="2"/></svg>
<div class="a" style="left:241px;top:127px;width:17px;height:351px;background:#e3e4e6"></div>
<div class="a" style="left:329px;top:127px;width:5px;height:92px;border:1px solid #c19a2c"></div>
<div class="a" style="left:354px;top:173px;width:1010px;height:45px;border:1px solid #e8e8ee"></div>
<svg style="left:1367px;top:131px" width="14" height="14" viewBox="0 0 14 14"><path d="M2.5 4.5 V1.8 Q2.5 0.5 3.8 0.5 H10.2 Q11.5 0.5 11.5 1.8 V4.5 M2.5 8.5 V11.2 Q2.5 12.5 3.8 12.5 H10.2 Q11.5 12.5 11.5 11.2 V8.5" fill="none" stroke="#1e1e1e" stroke-width="1.1"/><path d="M0 6.5 H14" stroke="#1e1e1e" stroke-width="1.1"/></svg>
<div class="a" style="left:1364px;top:166px;width:6px;height:53px;border:1.3px solid #d2b650;border-top:none"></div>
<div class="a" style="left:1370px;top:166px;width:8px;height:239px;background:#8c8c8c;border-radius:4px"></div>
<div class="a" style="left:1364px;top:198px;width:19px;height:2px;background:#0000c8"></div>
<div class="a" style="left:241px;top:478px;width:1142px;height:24px;background:#f4f4f4"></div>
<div class="a" style="left:241px;top:502px;width:1142px;height:4px;background:#f2f7fb"></div>
<div class="a" style="left:242px;top:481px;width:74px;height:18px;background:#fafafa;border:1px solid #ebebeb;border-radius:4px"></div>
<svg style="left:299px;top:487px" width="10" height="6"><path d="M0.5 0.5 L4.5 4.5 L8.5 0.5" fill="none" stroke="#1e1e1e" stroke-width="1.1"/></svg>
<svg style="left:341px;top:483px" width="12" height="12"><circle cx="6" cy="6" r="5.6" fill="#1e8a2e"/><path d="M3.4 6.2 L5.2 7.9 L8.6 4.3" fill="none" stroke="#fff" stroke-width="1.3"/></svg>
<div class="a" style="left:1216px;top:482px;width:1px;height:16px;background:#dddddd"></div>
<div class="a" style="left:1256px;top:482px;width:1px;height:16px;background:#dddddd"></div>
<div class="a" style="left:1296px;top:482px;width:1px;height:16px;background:#dddddd"></div>
<div class="a" style="left:241px;top:506px;width:1142px;height:21px;background:#f3f3f3;border-bottom:1px solid #c9cbe0"></div>
<div class="a" style="left:241px;top:506px;width:86px;height:22px;background:#f3f3f3;border-top:1px solid #c9cbe0;border-right:1px solid #c9cbe0"></div>
<svg style="left:247px;top:508px" width="16" height="17" viewBox="0 0 16 17"><path d="M4.4 6 V2.2 Q4.4 1.2 5.4 1.2 H9.8 L13.8 5.2 V13.8 Q13.8 14.8 12.8 14.8 H7.5" fill="#fff" stroke="#111" stroke-width="1.1"/><path d="M9.6 1.2 V4.4 Q9.6 5.2 10.4 5.2 H13.8" fill="none" stroke="#111" stroke-width="1.1"/><path d="M8.2 8.4 H12 M8.2 10.4 H12 M8.2 12.4 H12 M8.2 14.5 H13" stroke="#111" stroke-width="1"/><rect x="0" y="5" width="8" height="12" fill="#fff"/><rect x="1.1" y="6.1" width="5.7" height="9.8" rx="1.4" fill="#111"/><rect x="2" y="7.1" width="3.9" height="1" fill="#fff"/><rect x="2" y="12" width="3.9" height="1" fill="#fff"/><rect x="2" y="14" width="3.9" height="0.9" fill="#fff"/></svg>
<div class="a" style="left:241px;top:528px;width:1140px;height:324px;background:#fefefe;border-right:1px solid #cfd0e0"></div>
<div class="a" style="left:241px;top:528px;width:4px;height:323px;background:#f3f3f3;border-right:1px solid #ebebeb"></div>
<div class="a" style="left:1366px;top:546px;width:8px;height:170px;background:#8c8c8c;border-radius:4px"></div>
<div class="a" style="left:1360px;top:616px;width:19px;height:2px;background:#0000c0"></div>
<div class="a" style="left:246px;top:828px;width:74px;height:20px;background:#fff;border:1px solid #ececec;border-radius:4px"></div>
<svg style="left:303px;top:835px" width="10" height="6"><path d="M0.5 0.5 L4.5 4.5 L8.5 0.5" fill="none" stroke="#1e1e1e" stroke-width="1.1"/></svg>
<div class="a" style="left:321px;top:829px;width:171px;height:18px;background:#f0f0f0"></div>
<svg style="left:344px;top:832px" width="12" height="12"><circle cx="6" cy="6" r="5.6" fill="#1e8a2e"/><path d="M3.4 6.2 L5.2 7.9 L8.6 4.3" fill="none" stroke="#fff" stroke-width="1.3"/></svg>
<div class="a" style="left:1124px;top:827px;width:66px;height:23px;background:#f2f2f2;border-radius:3px"></div>
<div class="a" style="left:1195px;top:827px;width:34px;height:23px;background:#f2f2f2;border-radius:3px"></div>
<div class="a" style="left:1234px;top:827px;width:44px;height:23px;background:#f2f2f2;border-radius:3px"></div>
<div class="a" style="left:1283px;top:827px;width:97px;height:23px;background:#f2f2f2;border-radius:3px"></div>
<div class="a" style="left:241px;top:851px;width:1142px;height:1px;background:#c9cbe0"></div>
<div class="a" style="left:241px;top:852px;width:1142px;height:3px;background:#f6f6f6"></div>
<div class="a" style="left:241px;top:855px;width:1142px;height:22px;background:#efe28a"></div>
<svg style="left:244px;top:858px" width="16" height="16"><circle cx="8.1" cy="7.8" r="7.6" fill="#fff"/><circle cx="8.1" cy="7.8" r="6.8" fill="#2e9a36"/><path d="M4.6 8.4 L7.2 11.1 L11.4 4.9" fill="none" stroke="#fff" stroke-width="2"/></svg>
<div class="a" style="left:792px;top:858px;width:1px;height:15px;background:#f8f8f8"></div>
<div class="a" style="left:985px;top:858px;width:1px;height:15px;background:#f8f8f8"></div>
<div class="a" style="left:1138px;top:858px;width:1px;height:15px;background:#f8f8f8"></div>
<div class="a" style="left:1187px;top:858px;width:1px;height:15px;background:#f8f8f8"></div>
<div class="a" style="left:1242px;top:858px;width:1px;height:15px;background:#f8f8f8"></div>
<div class="a" style="left:1326px;top:858px;width:1px;height:15px;background:#f8f8f8"></div>
<div class="a" style="left:7px;top:904px;width:38px;height:3px;border-radius:2px;background:#5f7f93"></div>
<div class="a" style="left:1px;top:911px;width:1389px;height:24px;background:#4a5863;border-radius:0 0 7px 7px"></div>
<svg style="left:8px;top:915px" width="17" height="17" viewBox="0 0 17 17">
      <path d="M0.5 0.5 H15.5 V12.5 H10.5 L8 15 L5.5 12.5 H0.5 Z" fill="#5b6874" stroke="#e6e6e6" stroke-width="1"/></svg>
<svg style="left:1351px;top:916px" width="12" height="14" viewBox="0 0 12 14">
      <path d="M1 10.5 H11 L9.5 8.5 V5.5 Q9.5 1 6 1 Q2.5 1 2.5 5.5 V8.5 Z" fill="none" stroke="#e8e8e8" stroke-width="1"/>
      <path d="M4.5 11.5 Q6 13.5 7.5 11.5" fill="none" stroke="#e8e8e8" stroke-width="1"/></svg>
<svg style="left:1377px;top:922px" width="10" height="10"><rect x="7" y="1" width="1.3" height="1.3" fill="#bcc4cb"/><rect x="5" y="3" width="1.3" height="1.3" fill="#bcc4cb"/><rect x="7" y="3" width="1.3" height="1.3" fill="#bcc4cb"/><rect x="3" y="5" width="1.3" height="1.3" fill="#bcc4cb"/><rect x="5" y="5" width="1.3" height="1.3" fill="#bcc4cb"/><rect x="7" y="5" width="1.3" height="1.3" fill="#bcc4cb"/><rect x="1" y="7" width="1.3" height="1.3" fill="#bcc4cb"/><rect x="3" y="7" width="1.3" height="1.3" fill="#bcc4cb"/><rect x="5" y="7" width="1.3" height="1.3" fill="#bcc4cb"/><rect x="7" y="7" width="1.3" height="1.3" fill="#bcc4cb"/></svg>
<div class="t" style="left:39.50px;top:9.84px;font-size:12px;color:#1e1e1e;font-weight:normal;transform:scaleX(0.8900);">File</div>
<div class="t" style="left:73.70px;top:9.84px;font-size:12px;color:#1e1e1e;font-weight:normal;transform:scaleX(0.9042);">Edit</div>
<div class="t" style="left:109.30px;top:9.84px;font-size:12px;color:#1e1e1e;font-weight:normal;transform:scaleX(0.9569);">View</div>
<div class="t" style="left:149.80px;top:9.84px;font-size:12px;color:#1e1e1e;font-weight:normal;transform:scaleX(0.9854);">Query</div>
<div class="t" style="left:198.00px;top:9.84px;font-size:12px;color:#1e1e1e;font-weight:normal;transform:scaleX(0.9375);">Git</div>
<div class="t" style="left:229.20px;top:9.84px;font-size:12px;color:#1e1e1e;font-weight:normal;transform:scaleX(0.9681);">Project</div>
<div class="t" style="left:282.40px;top:9.84px;font-size:12px;color:#1e1e1e;font-weight:normal;transform:scaleX(0.9852);">Tools</div>
<div class="t" style="left:325.80px;top:9.84px;font-size:12px;color:#1e1e1e;font-weight:normal;transform:scaleX(0.9404);">Extensions</div>
<div class="t" style="left:397.30px;top:9.84px;font-size:12px;color:#1e1e1e;font-weight:normal;transform:scaleX(1.0160);">Window</div>
<div class="t" style="left:457.00px;top:9.84px;font-size:12px;color:#1e1e1e;font-weight:normal;transform:scaleX(0.9798);">Help</div>
<div class="t" style="left:517.20px;top:9.84px;font-size:12px;color:#1e1e1e;font-weight:normal;transform:scaleX(0.9238);">Search</div>
<div class="t" style="left:1213.00px;top:9.84px;font-size:12px;color:#1e1e1e;font-weight:normal;transform:scaleX(0.9856);">Sign in</div>
<div class="t" style="left:211.30px;top:39.84px;font-size:12px;color:#1e1e1e;font-weight:normal;transform:scaleX(0.9780);">New Query</div>
<div class="t" style="left:80.50px;top:74.24px;font-size:12px;color:#1e1e1e;font-weight:normal;transform:scaleX(0.9679);">master</div>
<div class="t" style="left:251.40px;top:74.34px;font-size:12px;color:#1e1e1e;font-weight:normal;transform:scaleX(0.9111);">Execute</div>
<div class="t" style="left:16.70px;top:107.84px;font-size:12px;color:#4d4d4d;font-weight:normal;transform:scaleX(0.9552);-webkit-text-stroke:0.1px #4d4d4d;">Object Explorer</div>
<div class="t" style="left:16.50px;top:134.84px;font-size:12px;color:#1e1e1e;font-weight:normal;transform:scaleX(0.9744);">Connect</div>
<div class="a" style="left:49px;top:156px;width:184px;height:17px;overflow:hidden"><div class="t" style="left:2.50px;top:2.84px;font-size:12px;color:#1e1e1e;transform:scaleX(0.8794);">PARALLELSWIN11\SQLEXPRESS (SQL Server 16.0.1000 - PARALLELSWIN11\Silver)</div></div>
<div class="t" style="left:70.30px;top:176.84px;font-size:12px;color:#1e1e1e;font-weight:normal;transform:scaleX(0.9116);">Databases</div>
<div class="t" style="left:70.30px;top:194.84px;font-size:12px;color:#1e1e1e;font-weight:normal;transform:scaleX(0.9597);">Security</div>
<div class="t" style="left:70.30px;top:212.84px;font-size:12px;color:#1e1e1e;font-weight:normal;transform:scaleX(0.9451);">Server Objects</div>
<div class="t" style="left:70.30px;top:230.84px;font-size:12px;color:#1e1e1e;font-weight:normal;transform:scaleX(0.9882);">Replication</div>
<div class="t" style="left:70.30px;top:248.84px;font-size:12px;color:#1e1e1e;font-weight:normal;transform:scaleX(0.9956);">Management</div>
<div class="t" style="left:70.30px;top:266.84px;font-size:12px;color:#1e1e1e;font-weight:normal;transform:scaleX(0.9621);">XEvent Profiler</div>
<div class="t" style="left:247.30px;top:107.84px;font-size:12px;color:#1e1e1e;font-weight:bold;transform:scaleX(0.9656);-webkit-text-stroke:0;">SQLQuery1.s...mpalu (77))*</div>
<div class="t" style="left:292.40px;top:181.72px;font-size:32.7px;color:#000000;font-weight:normal;-webkit-text-stroke:0.35px #fff;">2</div>
<div class="t" style="left:356.40px;top:181.72px;font-size:32.7px;color:#0000ff;font-weight:normal;transform:scaleX(0.7970);-webkit-text-stroke:0.35px #fff;">CREATE</div>
<div class="t" style="left:471.13px;top:181.72px;font-size:32.7px;color:#0000ff;font-weight:normal;transform:scaleX(0.8349);-webkit-text-stroke:0.35px #fff;">DATABASE</div>
<div class="t" style="left:622.98px;top:181.72px;font-size:32.7px;color:#000080;font-weight:normal;transform:scaleX(0.9102);-webkit-text-stroke:0.35px #fff;">Proov</div>
<div class="t" style="left:248.70px;top:483.64px;font-size:12px;color:#1e1e1e;font-weight:normal;transform:scaleX(0.8732);">100 %</div>
<div class="t" style="left:357.60px;top:483.84px;font-size:12px;color:#1e1e1e;font-weight:normal;transform:scaleX(0.9815);">No issues found</div>
<div class="t" style="left:1104.00px;top:483.84px;font-size:12px;color:#1e1e1e;font-weight:normal;transform:scaleX(0.9320);">Ln: 2, Ch: 22, Col: 40</div>
<div class="t" style="left:1223.40px;top:483.84px;font-size:12px;color:#1e1e1e;font-weight:normal;transform:scaleX(0.8605);">TABS</div>
<div class="t" style="left:1263.50px;top:483.84px;font-size:12px;color:#1e1e1e;font-weight:normal;transform:scaleX(0.8450);">CRLF</div>
<div class="t" style="left:1303.00px;top:483.84px;font-size:12px;color:#1e1e1e;font-weight:normal;transform:scaleX(0.9565);">Windows 1257</div>
<div class="t" style="left:269.70px;top:510.97px;font-size:11.5px;color:#1e1e1e;font-weight:normal;transform:scaleX(0.8868);">Messages</div>
<div class="t" style="left:283.65px;top:536.12px;font-size:27.5px;color:#000000;font-weight:normal;transform:scaleX(0.9528);-webkit-text-stroke:0.35px #fff;">Commands</div>
<div class="t" style="left:424.32px;top:536.12px;font-size:27.5px;color:#000000;font-weight:normal;transform:scaleX(0.9785);-webkit-text-stroke:0.35px #fff;">completed</div>
<div class="t" style="left:557.10px;top:536.12px;font-size:27.5px;color:#000000;font-weight:normal;transform:scaleX(0.8903);-webkit-text-stroke:0.35px #fff;">successfully.</div>
<div class="t" style="left:283.62px;top:611.82px;font-size:27.5px;color:#000000;font-weight:normal;transform:scaleX(0.9760);-webkit-text-stroke:0.35px #fff;">Completion time:</div>
<div class="t" style="left:490.81px;top:611.82px;font-size:27.5px;color:#000000;font-weight:normal;transform:scaleX(0.8879);-webkit-text-stroke:0.35px #fff;">2025-12-17T00:19:14.5665358+02:00</div>
<div class="t" style="left:252.30px;top:831.54px;font-size:12px;color:#1e1e1e;font-weight:normal;transform:scaleX(0.8936);">100 %</div>
<div class="t" style="left:361.50px;top:831.54px;font-size:12px;color:#1e1e1e;font-weight:normal;transform:scaleX(0.9850);">No issues found</div>
<div class="t" style="left:1128.30px;top:831.84px;font-size:12px;color:#1e1e1e;font-weight:normal;transform:scaleX(0.9092);">Ln: 4, Ch: 1</div>
<div class="t" style="left:1199.50px;top:831.84px;font-size:12px;color:#1e1e1e;font-weight:normal;transform:scaleX(0.8638);">TABS</div>
<div class="t" style="left:1239.00px;top:831.84px;font-size:12px;color:#1e1e1e;font-weight:normal;transform:scaleX(0.8869);">MIXED</div>
<div class="t" style="left:1287.30px;top:831.84px;font-size:12px;color:#1e1e1e;font-weight:normal;transform:scaleX(0.9816);">UTF-8 with BOM</div>
<div class="t" style="left:264.50px;top:859.64px;font-size:12px;color:#1e1e1e;font-weight:normal;transform:scaleX(0.9739);">Query executed successfully.</div>
<div class="t" style="left:797.60px;top:859.84px;font-size:12px;color:#1e1e1e;font-weight:normal;transform:scaleX(0.8796);">PARALLELSWIN11\SQLEXPRESS (...</div>
<div class="t" style="left:991.70px;top:859.84px;font-size:12px;color:#1e1e1e;font-weight:normal;transform:scaleX(0.9224);">PARALLELSWIN11\Silver ...</div>
<div class="t" style="left:1143.70px;top:859.84px;font-size:12px;color:#1e1e1e;font-weight:normal;transform:scaleX(0.9570);">master</div>
<div class="t" style="left:1193.00px;top:859.84px;font-size:12px;color:#1e1e1e;font-weight:normal;transform:scaleX(0.8653);">00:00:00</div>
<div class="t" style="left:1247.00px;top:859.84px;font-size:12px;color:#1e1e1e;font-weight:normal;transform:scaleX(0.9380);">Row: 0, Col: 0</div>
<div class="t" style="left:1331.00px;top:859.84px;font-size:12px;color:#1e1e1e;font-weight:normal;transform:scaleX(0.9620);">0 rows</div>
<div class="t" style="left:7.50px;top:885.74px;font-size:12px;color:#1e1e1e;font-weight:normal;transform:scaleX(1.0194);">Output</div>
<div class="t" style="left:35.60px;top:916.84px;font-size:12px;color:#ffffff;font-weight:normal;transform:scaleX(0.9052);">Ready</div>
</body></html>
